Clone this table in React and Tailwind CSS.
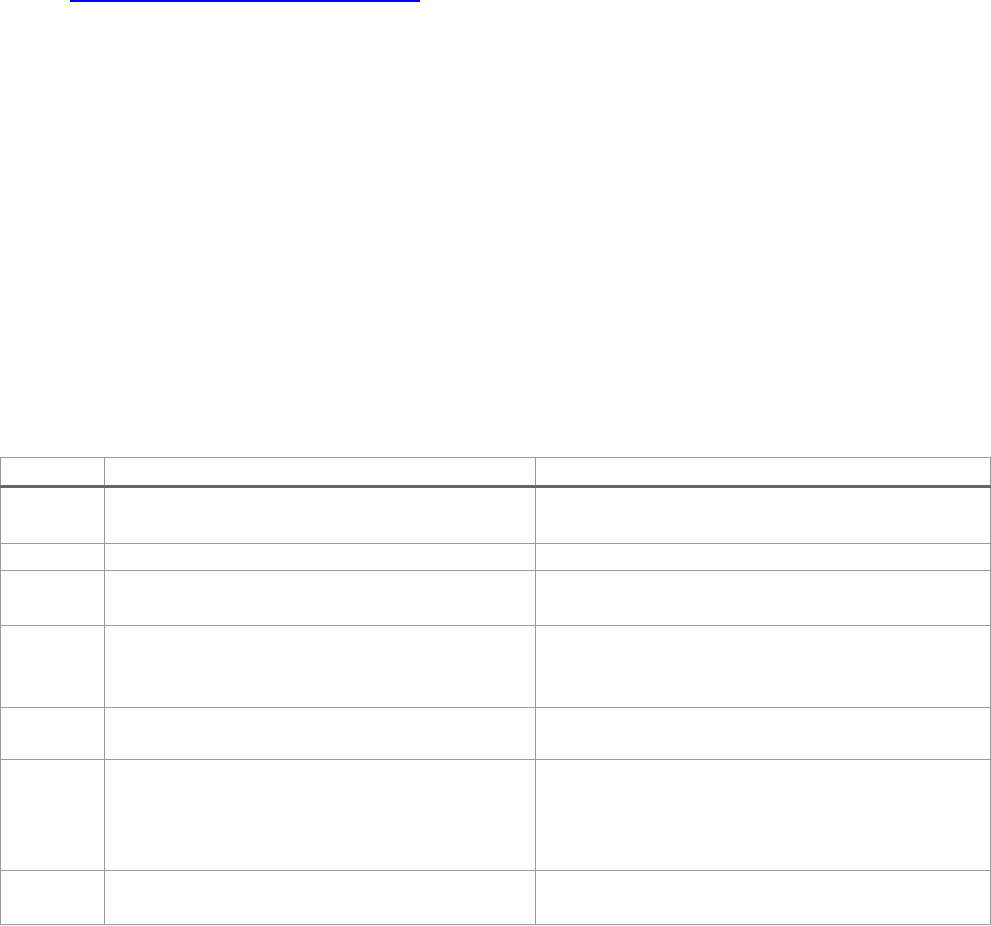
import React from "react";

// Row heights measured from the reference (content box incl. one border)
const rows = [
  { h: "h-[57px]" },
  { h: "h-[27px]" },
  { h: "h-[55px]" },
  { h: "h-[82px]" },
  { h: "h-[52px]" },
  { h: "h-[111px]" },
  { h: "h-[54px]" },
];

export default function App() {
  return (
    <div className="min-h-screen bg-white font-['Liberation_Sans',Arial,sans-serif] text-sm text-black">
      {/* Link underline peeking at top of the viewport */}
      <div className="ml-[70px] h-[2px] w-[350px] bg-[#0000ee]" />

      <div className="mt-[455px]">
        <table className="w-[990px] table-fixed border-collapse">
          <colgroup>
            <col className="w-[104px]" />
            <col className="w-[431px]" />
            <col className="w-[455px]" />
          </colgroup>
          <thead>
            <tr className="h-[29px] border-b-[3px] border-b-[#666666]">
              <th className="border border-[#999999] border-b-[3px] border-b-[#666666]"></th>
              <th className="border border-[#999999] border-b-[3px] border-b-[#666666]"></th>
              <th className="border border-[#999999] border-b-[3px] border-b-[#666666]"></th>
            </tr>
          </thead>
          <tbody>
            {rows.map((r, i) => (
              <tr key={i} className={r.h}>
                <td className="border border-[#999999]"></td>
                <td className="border border-[#999999]"></td>
                <td className="border border-[#999999]"></td>
              </tr>
            ))}
          </tbody>
        </table>
      </div>
    </div>
  );
}
